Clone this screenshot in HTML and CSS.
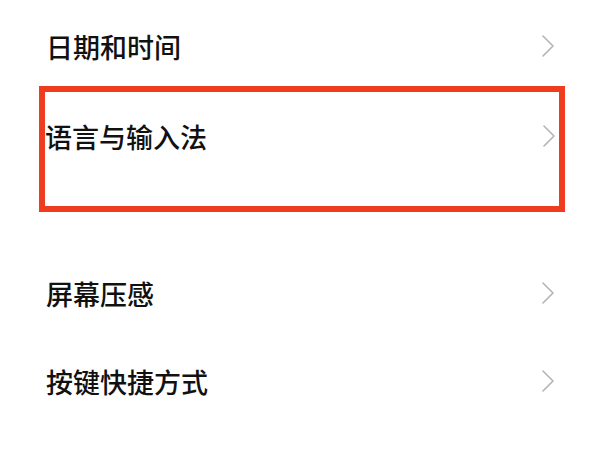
FILE: index.html
```html
<!DOCTYPE html>
<html lang="zh-CN">
<head>
<meta charset="utf-8">
<title>设置</title>
<link rel="stylesheet" href="styles.css">
</head>
<body>
<div class="settings-list">
  <div class="item item-first">
    <span class="item-label">日期和时间</span>
    <svg class="chevron" viewBox="0 0 12 22" width="12" height="22"><polyline points="1,1 11,11 1,21"/></svg>
  </div>
  <div class="highlight">
    <div class="item item-hl">
      <span class="item-label">语言与输入法</span>
      <svg class="chevron" viewBox="0 0 12 22" width="12" height="22"><polyline points="1,1 11,11 1,21"/></svg>
    </div>
  </div>
  <div class="item item-after">
    <span class="item-label">屏幕压感</span>
    <svg class="chevron" viewBox="0 0 12 22" width="12" height="22"><polyline points="1,1 11,11 1,21"/></svg>
  </div>
  <div class="item">
    <span class="item-label">按键快捷方式</span>
    <svg class="chevron" viewBox="0 0 12 22" width="12" height="22"><polyline points="1,1 11,11 1,21"/></svg>
  </div>
</div>
</body>
</html>
```
FILE: styles.css
```css
html, body {
  margin: 0;
  padding: 0;
  background: #ffffff;
}
body {
  width: 600px;
  height: 450px;
  overflow: hidden;
  font-family: "Noto Sans CJK SC", "Noto Sans", sans-serif;
  color: #111111;
}
.settings-list {
  display: flex;
  flex-direction: column;
  padding-top: 6px;
}
.item {
  display: flex;
  align-items: center;
  justify-content: space-between;
  height: 88px;
  padding: 0 46px 0 46px;
}
.item-first {
  height: 80px;
}
.item-label {
  font-size: 27px;
  font-weight: 500;
  line-height: 1;
  letter-spacing: 0;
}
.chevron {
  display: block;
  flex: none;
}
.chevron polyline {
  fill: none;
  stroke: #b4b4b4;
  stroke-width: 1.6;
  stroke-linecap: round;
  stroke-linejoin: round;
}
.highlight {
  margin: 0 35px 0 39px;
  border: 6px solid #f03c1e;
  height: 114px;
}
.item-hl {
  padding: 0 4px 0 0;
}
.item-after {
  margin-top: 37px;
}
```
